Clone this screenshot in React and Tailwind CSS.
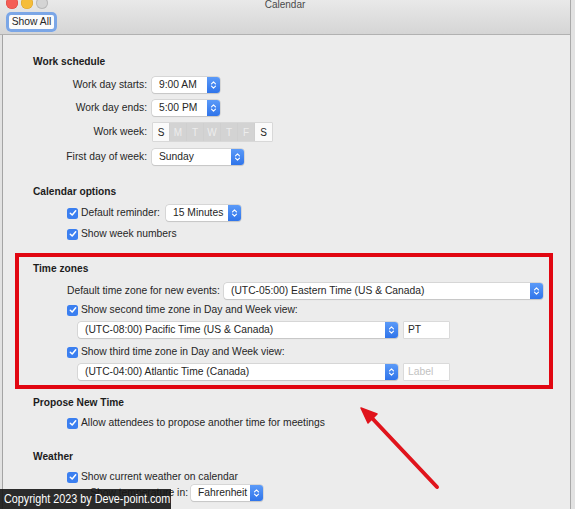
import React from "react";

const Check = () => (
  <span className="flex h-[11px] w-[11px] shrink-0 items-center justify-center rounded-[2.5px] bg-[#3b7ff0]">
    <svg width="8" height="8" viewBox="0 0 8 8">
      <path d="M1.3 4.2 L3.2 6 L6.7 1.8" fill="none" stroke="#fff" strokeWidth="1.5" strokeLinecap="round" strokeLinejoin="round" />
    </svg>
  </span>
);

const Stepper = () => (
  <span className="flex h-full w-[13px] shrink-0 items-center justify-center rounded-r-[3px] bg-gradient-to-b from-[#5b9af8] to-[#2f74ea]">
    <svg width="7" height="10" viewBox="0 0 7 10">
      <path d="M1.5 3.8 L3.5 1.8 L5.5 3.8 M1.5 6.2 L3.5 8.2 L5.5 6.2" fill="none" stroke="#fff" strokeWidth="1.1" strokeLinecap="round" strokeLinejoin="round" />
    </svg>
  </span>
);

const Popup = ({ text, className = "" }) => (
  <div className={`flex h-[16px] items-center rounded-[3px] bg-white shadow-[0_0_0_0.5px_#c3c3c3,0_0.5px_1px_rgba(0,0,0,0.15)] ${className}`}>
    <span className="flex-1 truncate pl-[7px] text-[10.3px] leading-none text-[#262626]">{text}</span>
    <Stepper />
  </div>
);

const Heading = ({ children, className = "" }) => (
  <div className={`h-[14px] text-[10.2px] font-bold leading-[14px] text-[#1c1c1c] ${className}`}>{children}</div>
);

const LabelRow = ({ label, children, className = "" }) => (
  <div className={`flex items-center ${className}`}>
    <span className="w-[148px] pr-[1px] text-right text-[10.3px] leading-[14px] text-[#262626]">{label}</span>
    <div className="ml-[4px] flex items-center">{children}</div>
  </div>
);

const CheckRow = ({ label, className = "" }) => (
  <div className={`flex h-[14px] items-center ${className}`}>
    <Check />
    <span className="ml-[3px] text-[10.3px] leading-[14px] text-[#262626]">{label}</span>
  </div>
);

const days = [
  { d: "S", on: true },
  { d: "M", on: false },
  { d: "T", on: false },
  { d: "W", on: false },
  { d: "T", on: false },
  { d: "F", on: false },
  { d: "S", on: true },
];

export default function App() {
  return (
    <div className="relative h-[509px] w-[575px] overflow-hidden bg-[#e2e2e2] font-['Liberation_Sans',Arial,sans-serif]">
      <div className="flex h-full w-[571px] flex-col border-r border-[#a9a9a9]">
        {/* title bar */}
        <div className="h-[35px] shrink-0 border-b border-[#b1b1b1] bg-gradient-to-b from-[#e9e9e9] to-[#d5d5d5]">
          <div className="grid h-[7px] grid-cols-[1fr_auto_1fr] items-end">
            <div className="flex gap-[3px] pl-[6px]">
              <span className="-mt-[6px] h-[12px] w-[12px] rounded-full bg-[#f45d55] shadow-[inset_0_0_0_0.5px_#d9443d]" />
              <span className="-mt-[6px] h-[12px] w-[12px] rounded-full bg-[#f5bd3a] shadow-[inset_0_0_0_0.5px_#d9a12a]" />
              <span className="-mt-[6px] h-[12px] w-[12px] rounded-full bg-[#d4d4d4] shadow-[inset_0_0_0_1px_#b9b9b9]" />
            </div>
            <span className="-mb-[1px] text-[10px] leading-[10px] text-[#4a4a4a]">Calendar</span>
            <div />
          </div>
          <div className="mt-[5px] pl-[6px]">
            <div className="flex h-[20px] w-[51px] items-center justify-center rounded-[5px] bg-[#fbfbfb] shadow-[0_0_0_3px_#7ba6e6_inset]">
              <span className="text-[10.3px] leading-none text-[#262626]">Show All</span>
            </div>
          </div>
        </div>

        {/* preferences body */}
        <div className="ml-[2px] flex-1 border-l border-[#a4a4a4] bg-[#ececec] pt-[20px]">
          <Heading className="ml-[30px]">Work schedule</Heading>

          <LabelRow label="Work day starts:" className="-ml-[3px] mt-[8px] h-[16px]">
            <Popup text="9:00 AM" className="w-[68px]" />
          </LabelRow>
          <LabelRow label="Work day ends:" className="-ml-[3px] mt-[7px] h-[16px]">
            <Popup text="5:00 PM" className="w-[68px]" />
          </LabelRow>
          <LabelRow label="Work week:" className="-ml-[3px] mt-[7px] h-[18px]">
            <div className="ml-[1px] flex h-[18px] shadow-[0_0_0_0.5px_#c4c4c4]">
              {days.map((x, i) => (
                <span
                  key={i}
                  className={`flex h-[18px] w-[17px] items-center justify-center border-r border-[#cfcfcf] text-[10px] last:border-r-0 ${
                    x.on ? "bg-[#fafafa] text-[#262626]" : "bg-[#d3d3d3] text-[#ededed]"
                  }`}
                >
                  {x.d}
                </span>
              ))}
            </div>
          </LabelRow>
          <LabelRow label="First day of week:" className="-ml-[3px] mt-[8px] h-[16px]">
            <Popup text="Sunday" className="w-[92px]" />
          </LabelRow>

          <Heading className="ml-[30px] mt-[20px]">Calendar options</Heading>
          <div className="ml-[64px] mt-[6px] flex h-[16px] items-center">
            <Check />
            <span className="ml-[3px] text-[10.3px] leading-[14px] text-[#262626]">Default reminder:</span>
            <Popup text="15 Minutes" className="ml-[6px] w-[75px]" />
          </div>
          <CheckRow label="Show week numbers" className="ml-[64px] mt-[6px]" />

          {/* highlighted time zone section */}
          <div className="ml-[12px] mt-[12px] w-[538px] border-[4px] border-[#e10611] pb-[5px] pt-[5px]">
            <Heading className="ml-[14px]">Time zones</Heading>
            <div className="ml-[48px] mr-[6px] mt-[7px] flex h-[16px] items-center">
              <span className="text-[10.3px] leading-[14px] text-[#262626]">Default time zone for new events:</span>
              <Popup text="(UTC-05:00) Eastern Time (US & Canada)" className="ml-[auto] w-[319px]" />
            </div>
            <CheckRow label="Show second time zone in Day and Week view:" className="ml-[48px] mt-[4px]" />
            <div className="ml-[59px] mt-[5px] flex h-[16px] items-center">
              <Popup text="(UTC-08:00) Pacific Time (US & Canada)" className="w-[320px]" />
              <div className="ml-[6px] flex h-[16px] w-[45px] items-center bg-white pl-[4px] text-[10.3px] text-[#262626] shadow-[0_0_0_0.5px_#c8c8c8]">PT</div>
            </div>
            <CheckRow label="Show third time zone in Day and Week view:" className="ml-[48px] mt-[7px]" />
            <div className="ml-[59px] mt-[5px] flex h-[16px] items-center">
              <Popup text="(UTC-04:00) Atlantic Time (Canada)" className="w-[320px]" />
              <div className="ml-[6px] flex h-[16px] w-[45px] items-center bg-white pl-[4px] text-[10.3px] text-[#c2c2c2] shadow-[0_0_0_0.5px_#c8c8c8]">Label</div>
            </div>
          </div>

          <Heading className="ml-[30px] mt-[7px]">Propose New Time</Heading>
          <CheckRow label="Allow attendees to propose another time for meetings" className="ml-[64px] mt-[6px]" />

          <Heading className="ml-[30px] mt-[20px]">Weather</Heading>
          <CheckRow label="Show current weather on calendar" className="ml-[64px] mt-[6px]" />
          <div className="mt-[1px] flex h-[16px] items-center">
            <span className="w-[185px] text-right text-[10.3px] leading-[14px] text-[#262626]">Show temperature in:</span>
            <Popup text="Fahrenheit" className="ml-[3px] w-[72px]" />
          </div>
        </div>
      </div>

      {/* annotation arrow */}
      <svg className="pointer-events-none absolute left-0 top-0" width="575" height="509" viewBox="0 0 575 509">
        <line x1="437" y1="487" x2="371" y2="417" stroke="#e0141c" strokeWidth="4" strokeLinecap="round" />
        <polygon points="361,408 377,414 368,423" fill="#e0141c" stroke="#e0141c" strokeWidth="1.5" strokeLinejoin="round" />
      </svg>

      {/* watermark */}
      <div className="absolute bottom-0 left-0 flex h-[20px] w-[171px] items-center overflow-hidden bg-[#161616]/90 pl-[4px]">
        <span className="origin-left scale-x-[0.8] whitespace-nowrap text-[13.5px] leading-none text-white">
          Copyright 2023 by Deve-point.com
        </span>
      </div>
    </div>
  );
}
